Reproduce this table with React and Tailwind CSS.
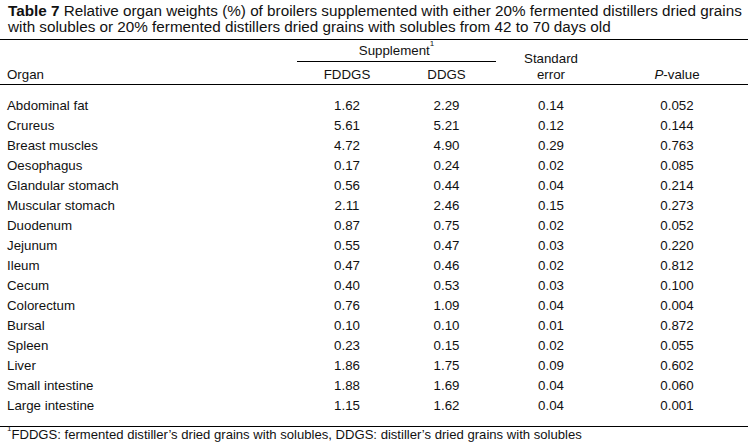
const rows = [
  ['Abdominal fat', '1.62', '2.29', '0.14', '0.052'],
  ['Crureus', '5.61', '5.21', '0.12', '0.144'],
  ['Breast muscles', '4.72', '4.90', '0.29', '0.763'],
  ['Oesophagus', '0.17', '0.24', '0.02', '0.085'],
  ['Glandular stomach', '0.56', '0.44', '0.04', '0.214'],
  ['Muscular stomach', '2.11', '2.46', '0.15', '0.273'],
  ['Duodenum', '0.87', '0.75', '0.02', '0.052'],
  ['Jejunum', '0.55', '0.47', '0.03', '0.220'],
  ['Ileum', '0.47', '0.46', '0.02', '0.812'],
  ['Cecum', '0.40', '0.53', '0.03', '0.100'],
  ['Colorectum', '0.76', '1.09', '0.04', '0.004'],
  ['Bursal', '0.10', '0.10', '0.01', '0.872'],
  ['Spleen', '0.23', '0.15', '0.02', '0.055'],
  ['Liver', '1.86', '1.75', '0.09', '0.602'],
  ['Small intestine', '1.88', '1.69', '0.04', '0.060'],
  ['Large intestine', '1.15', '1.62', '0.04', '0.001'],
];

const cols = 'grid grid-cols-[297px_100px_99px_110px_1fr]';

export default function App() {
  return (
    <div className="w-[748px] h-[444px] overflow-hidden bg-white text-[#111] font-['Liberation_Sans',Arial,sans-serif] text-[13.3px]">
      {/* Title */}
      <div className="pl-[8px] pr-[2px] pt-[3px] leading-[16px] text-[15.25px]">
        <span className="font-bold">Table 7</span> Relative organ weights (%) of broilers supplemented with either 20% fermented distillers dried grains with solubles or 20% fermented distillers dried grains with solubles from 42 to 70 days old
      </div>

      {/* Header */}
      <div className="mt-[4px] border-t border-black">
        <div className={`${cols} h-[45px] border-b border-black leading-[16px]`}>
          <div className="flex items-end pl-[7px] pb-[1px]">Organ</div>
          <div className="col-span-2 flex flex-col">
            <div className="mt-[3px] text-center border-b border-black pb-[2px]">
              Supplement<sup className="text-[8px] align-[5px]">1</sup>
            </div>
            <div className="flex flex-1 items-end pb-[1px]">
              <div className="w-[100px] text-center">FDDGS</div>
              <div className="w-[99px] text-center">DDGS</div>
            </div>
          </div>
          <div className="flex flex-col items-center justify-end pb-[1px]">
            <div>Standard</div>
            <div>error</div>
          </div>
          <div className="flex items-end justify-center pb-[1px]">
            <span>
              <i>P</i>-value
            </span>
          </div>
        </div>

        {/* Body */}
        <div className="pt-[11px] pb-[10px] border-b border-black">
          {rows.map((r) => (
            <div key={r[0]} className={`${cols} h-[20px] items-center`}>
              <div className="pl-[7px]">{r[0]}</div>
              <div className="text-center">{r[1]}</div>
              <div className="text-center">{r[2]}</div>
              <div className="text-center">{r[3]}</div>
              <div className="text-center">{r[4]}</div>
            </div>
          ))}
        </div>

        {/* Footnote */}
        <div className="pl-[7px] leading-[16px] text-[13.1px]">
          <sup className="text-[8px] align-[4px]">1</sup>FDDGS: fermented distiller’s dried grains with solubles, DDGS: distiller’s dried grains with solubles
        </div>
      </div>
    </div>
  );
}
